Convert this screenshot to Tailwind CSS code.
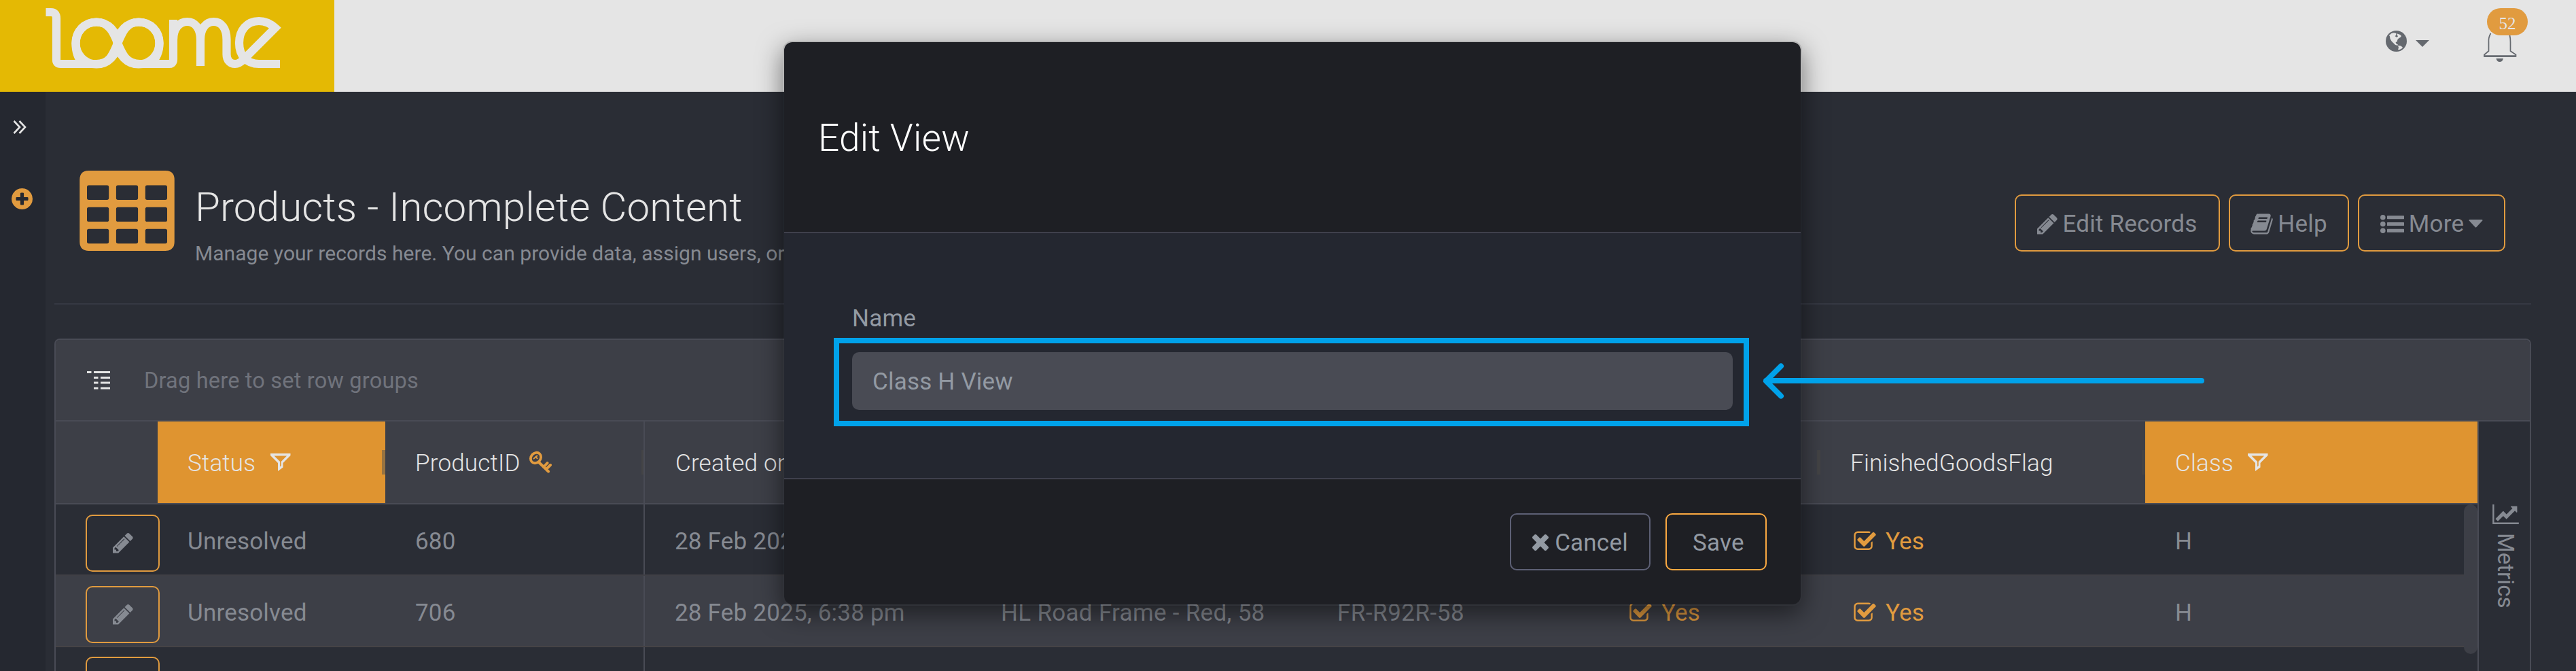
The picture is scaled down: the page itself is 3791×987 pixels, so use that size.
<!DOCTYPE html>
<html lang="en">
<head>
    <meta charset="UTF-8">
    <meta name="viewport" content="width=device-width, initial-scale=1.0">
    <title>Products - Incomplete Content - Loome</title>
    <script src="https://cdn.jsdelivr.net/npm/@tailwindcss/browser@4"></script>
</head>
<body class="relative flex h-screen flex-col overflow-hidden bg-[#2a2d35] font-['Roboto',sans-serif] text-[35px] leading-none tracking-[0.2px] text-[#868a92]">

<!-- Icon sprite -->
<svg class="hidden">
    <symbol id="pencil" viewBox="128 0 1536 1792">
        <path d="M491 1536l91-91-235-235-91 91v107h128v128h107zm523-928q0-22-22-22-10 0-17 7l-542 542q-7 7-7 17 0 22 22 22 10 0 17-7l542-542q7-7 7-17zm-54-192l416 416-832 832h-416v-416zm683 96q0 53-37 90l-166 166-416-416 166-165q36-38 90-38 53 0 91 38l235 234q37 39 37 91z"/>
    </symbol>
    <symbol id="check" viewBox="0 0 1792 1792">
        <path d="M1472 930v318q0 119-84.5 203.5t-203.5 84.5h-832q-119 0-203.5-84.5t-84.5-203.5v-832q0-119 84.5-203.5t203.5-84.5h832q63 0 117 25 15 7 18 23 3 17-9 29l-49 49q-10 10-23 10-3 0-9-2-23-6-45-6h-832q-66 0-113 47t-47 113v832q0 66 47 113t113 47h832q66 0 113-47t47-113v-254q0-13 9-22l64-64q10-10 23-10 6 0 12 3 20 8 20 29zm231-489l-814 814q-24 24-57 24t-57-24l-430-430q-24-24-24-57t24-57l110-110q24-24 57-24t57 24l263 263 647-647q24-24 57-24t57 24l110 110q24 24 24 57t-24 57z"/>
    </symbol>
    <symbol id="filter" viewBox="0 0 30 26">
        <path fill-rule="evenodd" d="M0 0h29.500v3L18.500 14v6.500L11 26V14L0 3zM5.500 3.400l8.600 8.600v7.500l1.600-1.400v-6.100l8.400-8.600z"/>
    </symbol>
</svg>

<header class="flex h-[135px] shrink-0 items-start justify-between bg-[#e5e5e5]">
    <div class="h-[135px] w-[492px] bg-[#e4b904]">
        <svg class="h-[135px] w-[492px]" viewBox="0 0 492 135" fill="none" stroke="#e5e5e5" stroke-width="12.2">
            <path d="M67.500 18H75Q83 18 83 27V88Q83 94 89 94H142C162 94 166 80 173 64C180 47 186 32.500 204 32.500C222 32.500 234.500 46 234.500 63.500C234.500 76 230 86 222 93"/>
            <path d="M121 92C115 86 111.500 75 111.500 63.500C111.500 46 124 32.500 142 32.500C160 32.500 167 47 173 63C180 80 186 94 206 94H249Q255 94 255 87V35H249"/>
            <ellipse cx="142" cy="63.500" rx="30.500" ry="31"/>
            <ellipse cx="204" cy="63.500" rx="30.500" ry="31"/>
            <path d="M255 58C255 42 264 32 275.500 32C287 32 295 42 295 58V97"/>
            <path d="M295 58C295 42 303 32 314.500 32C326 32 333.500 42 333.500 58V80C333.500 89 339 94 346 94C351 94 355 91 359 87L405 41C398 34.500 390 31 381 31C363 31 352 45 352 63C352 82 363 94 381 94H412"/>
        </svg>
    </div>
    <div class="mr-[87px] flex items-start">
        <svg class="mt-[45px] h-[31px] w-[31px]" viewBox="0 0 31 31">
            <circle cx="15.500" cy="15.500" r="15.500" fill="#65696f"/>
            <path fill="#e5e5e5" d="M8.500 4L12 3.300L15.500 4L15 7L13.500 8L16 10L18 8.500L16.500 6L17 4.500L21 6L23 8L21.500 10L19.500 11L17.500 13L16.500 16.500L14.500 17L16 20L18 20.500L17.500 22L14 21L11.500 18.500L8.500 15.500L6.500 12L6 8.500L5 7zM18 22L22 22.500L25 24.500L23.500 26.500L20.500 28H18L19 25z"/>
        </svg>
        <svg class="mt-[59px] ml-[13px] h-[10px] w-5" viewBox="0 0 20 10"><path fill="#65696f" d="M0 0h20L10 10z"/></svg>
        <div class="relative ml-[79px] h-[92px] w-[50px]">
            <svg class="mt-[46px] h-[46px] w-[50px]" viewBox="0 0 50 46" fill="none" stroke="#65696f" stroke-width="1.700">
                <path d="M11.500 3Q8 9 8.500 16V29L2 34.500V37H48.500V34.500L40.500 29V16Q40.500 10 39.500 6"/>
                <path d="M1.500 36.500H48.500" stroke-width="2.500"/>
                <path d="M19.500 40H30Q29 45 24.700 45Q20.500 45 19.500 40z" fill="#65696f" stroke="none"/>
            </svg>
            <span class="absolute top-3 left-[6px] flex h-10 w-[60px] items-center justify-center rounded-[20px] bg-[#e19b3f] pt-[5px] font-['Liberation_Serif',serif] text-[25px] tracking-normal text-[#e5e5e5]">52</span>
        </div>
    </div>
</header>

<div class="flex min-h-0 flex-1">
    <aside class="w-[67px] shrink-0 bg-[#252830]">
        <svg class="mt-[42px] ml-[19px] h-5 w-5" viewBox="0 0 20 20" fill="none" stroke="#e5e5e5" stroke-width="2.600">
            <path d="M1.500 1l8.500 9l-8.500 9M9.500 1l8.500 9l-8.500 9"/>
        </svg>
        <svg class="mt-[80px] ml-[17px] h-[31px] w-[31px]" viewBox="128 128 1536 1536" fill="#e19b3f">
            <path d="M1344 960v-128q0-26-19-45t-45-19h-256v-256q0-26-19-45t-45-19h-128q-26 0-45 19t-19 45v256h-256q-26 0-45 19t-19 45v128q0 26 19 45t45 19h256v256q0 26 19 45t45 19h128q26 0 45-19t19-45v-256h256q26 0 45-19t19-45zm320-64q0 209-103 385.500t-279.500 279.500-385.500 103-385.500-103-279.500-279.500-103-385.500 103-385.500 279.500-279.500 385.500-103 385.500 103 279.500 279.500 103 385.500z"/>
        </svg>
    </aside>

    <main class="ml-[13px] flex w-[3645px] flex-col">
        <!-- Page title and actions -->
        <div class="flex h-[313px] shrink-0 items-start border-b-2 border-[#353843]">
            <svg class="mt-[116px] ml-[37px] h-[118px] w-[140px]" viewBox="0 0 1664 1408" fill="#e19b3f">
                <path fill-rule="evenodd" d="M160 0H1504Q1664 0 1664 160V1248Q1664 1408 1504 1408H160Q0 1408 0 1248V160Q0 0 160 0zM160 256Q128 256 128 288V480Q128 512 160 512H480Q512 512 512 480V288Q512 256 480 256zM672 256Q640 256 640 288V480Q640 512 672 512H992Q1024 512 1024 480V288Q1024 256 992 256zM1184 256Q1152 256 1152 288V480Q1152 512 1184 512H1504Q1536 512 1536 480V288Q1536 256 1504 256zM160 640Q128 640 128 672V864Q128 896 160 896H480Q512 896 512 864V672Q512 640 480 640zM672 640Q640 640 640 672V864Q640 896 672 896H992Q1024 896 1024 864V672Q1024 640 992 640zM1184 640Q1152 640 1152 672V864Q1152 896 1184 896H1504Q1536 896 1536 864V672Q1536 640 1504 640zM160 1024Q128 1024 128 1056V1248Q128 1280 160 1280H480Q512 1280 512 1248V1056Q512 1024 480 1024zM672 1024Q640 1024 640 1056V1248Q640 1280 672 1280H992Q1024 1280 1024 1248V1056Q1024 1024 992 1024zM1184 1024Q1152 1024 1152 1056V1248Q1152 1280 1184 1280H1504Q1536 1280 1536 1248V1056Q1536 1024 1504 1024z"/>
            </svg>
            <div class="mt-[130px] ml-[30px] whitespace-nowrap">
                <h1 class="text-[60px] leading-[80px] font-light tracking-[0.15px] text-[#e5e5e5]">Products - Incomplete Content</h1>
                <p class="mt-[10px] text-[30px] leading-[36px] tracking-[0.04px]">Manage your records here. You can provide data, assign users, or review changes.</p>
            </div>
            <div class="mt-[151px] mr-[38px] ml-auto flex gap-[13px]">
                <button class="flex h-[84px] w-[302px] items-center justify-center gap-[7px] rounded-[10px] border-2 border-[#e19b3f] pt-[2px]">
                    <svg class="h-[35px] w-[30px]" fill="currentColor"><use href="#pencil"/></svg>
                    Edit Records
                </button>
                <button class="flex h-[84px] w-[177px] items-center justify-center gap-[7px] rounded-[10px] border-2 border-[#e19b3f] pt-[2px]">
                    <svg class="h-[35px] w-[33px]" viewBox="64 0 1664 1792" fill="currentColor"><path d="M1703 478q40 57 18 129l-275 906q-19 64-76.500 107.500t-122.500 43.500h-923q-77 0-148.500-53.500t-99.500-131.500q-24-67-2-127 0-4 3-27t4-37q1-8-3-21.500t-3-19.500q2-11 8-21t16.500-23.500 16.500-23.500q23-38 45-91.500t30-91.500q3-10 .5-30t-.5-28q3-11 17-28t17-23q21-36 42-92t25-90q1-9-2.500-32t.5-28q4-13 22-30.500t22-22.500q19-26 42.500-84.500t27.500-96.500q1-8-3-25.500t-2-26.500q2-8 9-18t18-23 17-21q8-12 16.500-30.500t15-35 16-36 19.500-32 26.500-23.500 36-11.500 47.500 5.500l-1 3q38-9 51-9h761q74 0 114 56t18 130l-274 906q-36 119-71.500 153.500t-128.500 34.500h-869q-27 0-38 15-11 16-1 43 24 70 144 70h923q29 0 56-15.500t35-41.500l300-987q7-22 5-57 38 15 59 43zm-1064 2q-4 13 2 22.500t20 9.500h608q13 0 25.500-9.500t16.500-22.500l21-64q4-13-2-22.500t-20-9.500h-608q-13 0-25.500 9.500t-16.500 22.500zm-83 256q-4 13 2 22.500t20 9.500h608q13 0 25.500-9.500t16.500-22.500l21-64q4-13-2-22.500t-20-9.500h-608q-13 0-25.500 9.500t-16.500 22.500z"/></svg>
                    Help
                </button>
                <button class="flex h-[84px] w-[217px] items-center justify-center gap-[7px] rounded-[10px] border-2 border-[#e19b3f] pt-[2px]">
                    <svg class="h-[27px] w-[35px]" viewBox="0 0 35 27" fill="currentColor">
                        <circle cx="3.800" cy="3.800" r="3.800"/><circle cx="3.800" cy="13.500" r="3.800"/><circle cx="3.800" cy="23.200" r="3.800"/>
                        <rect x="10" y="1.200" width="25" height="5" rx="0.600"/><rect x="10" y="11" width="25" height="5" rx="0.600"/><rect x="10" y="20.800" width="25" height="5" rx="0.600"/>
                    </svg>
                    More
                    <svg class="h-3 w-[21px]" viewBox="0 0 21 12" fill="currentColor"><path d="M1.500 0h18q1.500 0 .8 1.500L11.500 11q-1 1-2 0L.7 1.500Q0 0 1.500 0z"/></svg>
                </button>
            </div>
        </div>

        <!-- Records grid -->
        <div class="mt-[50px] flex min-h-0 flex-1 flex-col overflow-hidden rounded-t-[8px] border-2 border-b-0 border-[#494b55]">
            <div class="flex h-[120px] shrink-0 items-center border-b-2 border-[#494b55] bg-[#3d3f47] pl-[46px] text-[32.5px] text-[#70737c]">
                <svg class="h-[27px] w-[34px]" viewBox="0 0 34 27" fill="#e5e5e5">
                    <path d="M0 0h6.500v3H0zM10 0h24v3H10zM10 8h6.500v3H10zM20 8h14v3H20zM10 15.500h6.500v3H10zM20 15.500h14v3H20zM10 23.500h6.500v3H10zM20 23.500h14v3H20z"/>
                </svg>
                <span class="ml-[50px] pt-[2px]">Drag here to set row groups</span>
            </div>
            <div class="flex min-h-0 flex-1">
                <div class="w-[3564px] shrink-0">
                    <div class="grid h-[122px] grid-cols-[150px_335px_382px_480px_495px_425px_330px_478px_489px] border-b-2 border-[#494b55] bg-[#3d3f47] font-light whitespace-nowrap text-[#e5e5e5]">
                        <div></div>
                        <div class="flex items-center bg-[#df9430] pl-11">
                            <span class="pt-[2px]">Status</span>
                            <svg class="ml-[22px] h-[26px] w-[30px]" fill="currentColor"><use href="#filter"/></svg>
                            <i class="ml-auto h-9 w-[5px] bg-[#987340]"></i>
                        </div>
                        <div class="flex items-center border-r-2 border-[#494b55] pl-11">
                            <span class="pt-[2px]">ProductID</span>
                            <svg class="ml-[10px] h-9 w-9" viewBox="0 0 36 36" fill="none" stroke="#e19b3f" stroke-width="4">
                                <ellipse cx="12.500" cy="11.500" rx="8.300" ry="7" transform="rotate(-48 12.500 11.500)" stroke-width="3.800"/>
                                <path d="M9 13L15 8M12 9l3 4" stroke-width="2"/>
                                <path d="M17 18L31 31.500M24 25l5.500-6M28 28l6-6" stroke-linecap="round"/>
                            </svg>
                            <i class="ml-auto h-9 w-[3px] bg-[#444446]"></i>
                        </div>
                        <div class="flex items-center pl-[45px]"><span class="pt-[2px]">Created on</span></div>
                        <div></div>
                        <div></div>
                        <div class="flex items-center"><i class="ml-auto h-9 w-[5px] bg-[#444446]"></i></div>
                        <div class="flex items-center pl-11">
                            <span class="pt-[2px]">FinishedGoodsFlag</span>
                            <i class="ml-auto h-9 w-[5px] bg-[#444446]"></i>
                        </div>
                        <div class="flex items-center bg-[#df9430] pl-11">
                            <span class="pt-[2px]">Class</span>
                            <svg class="ml-[21px] h-[26px] w-[30px]" fill="currentColor"><use href="#filter"/></svg>
                        </div>
                    </div>
                    <div class="flex">
                        <div class="w-[3544px]">
                            <div class="grid h-[105px] grid-cols-[150px_335px_382px_480px_495px_425px_330px_478px_469px] items-center border-b-2 border-[#3f3f45] whitespace-nowrap">
                                <div class="pl-11"><button class="mt-[10px] flex h-[84px] w-[109px] items-center justify-center rounded-[10px] border-2 border-[#e19b3f]"><svg class="h-[35px] w-[30px]" fill="currentColor"><use href="#pencil"/></svg></button></div>
                                <div class="pt-[5px] pl-11">Unresolved</div>
                                <div class="flex h-[103px] items-center border-r-2 border-[#494b55] pt-[5px] pl-11">680</div>
                                <div class="pt-[5px] pl-11">28 Feb 2025, 6:38 pm</div>
                                <div></div>
                                <div></div>
                                <div></div>
                                <div class="flex items-center gap-[13px] pt-[5px] pl-12 text-[#e19b3f]"><svg class="h-[35px] w-[35px]" fill="currentColor"><use href="#check"/></svg>Yes</div>
                                <div class="pt-[5px] pl-11">H</div>
                            </div>
                            <div class="grid h-[105px] grid-cols-[150px_335px_382px_480px_495px_425px_330px_478px_469px] items-center border-b-2 border-[#464346] bg-[#3d3f47] whitespace-nowrap">
                                <div class="pl-11"><button class="mt-[10px] flex h-[84px] w-[109px] items-center justify-center rounded-[10px] border-2 border-[#e19b3f]"><svg class="h-[35px] w-[30px]" fill="currentColor"><use href="#pencil"/></svg></button></div>
                                <div class="pt-[5px] pl-11">Unresolved</div>
                                <div class="flex h-[103px] items-center border-r-2 border-[#494b55] pt-[5px] pl-11">706</div>
                                <div class="pt-[5px] pl-11">28 Feb 2025, 6:38 pm</div>
                                <div class="pt-[5px] pl-11 tracking-[0.3px]">HL Road Frame - Red, 58</div>
                                <div class="pt-[5px] pl-11 tracking-[0.5px]">FR-R92R-58</div>
                                <div class="flex items-center gap-[13px] pt-[5px] pl-12 text-[#e19b3f]"><svg class="h-[35px] w-[35px]" fill="currentColor"><use href="#check"/></svg>Yes</div>
                                <div class="flex items-center gap-[13px] pt-[5px] pl-12 text-[#e19b3f]"><svg class="h-[35px] w-[35px]" fill="currentColor"><use href="#check"/></svg>Yes</div>
                                <div class="pt-[5px] pl-11">H</div>
                            </div>
                            <div class="grid h-[105px] grid-cols-[150px_335px_382px_1fr] items-center">
                                <div class="pl-11"><button class="mt-[10px] h-[84px] w-[109px] rounded-[10px] border-2 border-[#e19b3f]"></button></div>
                                <div></div>
                                <div class="h-[105px] border-r-2 border-[#494b55]"></div>
                            </div>
                        </div>
                        <div class="h-[220px] w-5 rounded-[10px] bg-[#3d3f47]"></div>
                    </div>
                </div>
                <div class="flex w-[77px] flex-col items-center border-l-2 border-[#494b55] pt-[122px] pl-[3px]">
                    <svg class="h-[29px] w-[39px]" viewBox="0 128 2048 1536" fill="currentColor">
                        <path d="M2048 1536v128h-2048v-1536h128v1408h1920zm-128-1248v435q0 21-19.500 29.500t-35.500-7.500l-121-121-633 633q-10 10-23 10t-23-10l-233-233-416 416-192-192 585-585q10-10 23-10t23 10l233 233 464-464-121-121q-16-16-7.500-35.500t29.500-19.500h435q14 0 23 9t9 23z"/>
                    </svg>
                    <span class="mt-[13px] text-[33px] tracking-normal [writing-mode:vertical-rl]">Metrics</span>
                </div>
            </div>
        </div>
    </main>
</div>

<!-- Edit View dialog -->
<div class="absolute top-[60px] left-[1152px] w-[1500px] rounded-[14px] border-2 border-black/20 bg-clip-padding shadow-[0_12px_37px_rgba(0,0,0,0.5)]">
    <div class="flex h-[281px] items-center rounded-t-[12px] border-b-2 border-[#3f404c] bg-[#1e1f24] pl-[50px]">
        <h2 class="pt-[3px] text-[55px] font-light text-white">Edit View</h2>
    </div>
    <div class="h-[360px] bg-[#242730] px-[100px] pt-[108px] text-[#939aa3]">
        <label class="block leading-[36px]">Name</label>
        <div class="mt-[31px] flex h-[85px] items-center rounded-[10px] bg-[#494b54] pt-[2px] pl-[30px]">Class H View</div>
    </div>
    <div class="flex h-[186px] items-start justify-end gap-[22px] rounded-b-[12px] border-t-2 border-[#3f404c] bg-[#1e1f24] pt-[50px] pr-[50px] text-[#939aa3]">
        <button class="flex h-[84px] w-[207px] items-center justify-center gap-[9px] rounded-[10px] border-2 border-[#5d6075] pt-[2px]">
            <svg class="h-6 w-6" viewBox="302 366 1188 1188" fill="currentColor"><path d="M1490 1322q0 40-28 68l-136 136q-28 28-68 28t-68-28l-294-294-294 294q-28 28-68 28t-68-28l-136-136q-28-28-28-68t28-68l294-294-294-294q-28-28-28-68t28-68l136-136q28-28 68-28t68 28l294 294 294-294q28-28 68-28t68 28l136 136q28 28 28 68t-28 68l-294 294 294 294q28 28 28 68z"/></svg>
            Cancel
        </button>
        <button class="flex h-[84px] w-[149px] items-center rounded-[10px] border-2 border-[#fca941] pt-[2px] pl-[38px]">Save</button>
    </div>
</div>

<!-- Callout around the name field -->
<div class="absolute top-[497px] left-[1227px] h-[130px] w-[1347px] border-8 border-[#00a2ea]"></div>
<svg class="absolute top-[530px] left-[2590px] h-[60px] w-[660px]" viewBox="0 0 660 60" fill="none" stroke="#00a2ea" stroke-width="8" stroke-linecap="round" stroke-linejoin="round">
    <path d="M9 30H650M31 8.500L9 30.500L31 52.500"/>
</svg>
</body>
</html>
